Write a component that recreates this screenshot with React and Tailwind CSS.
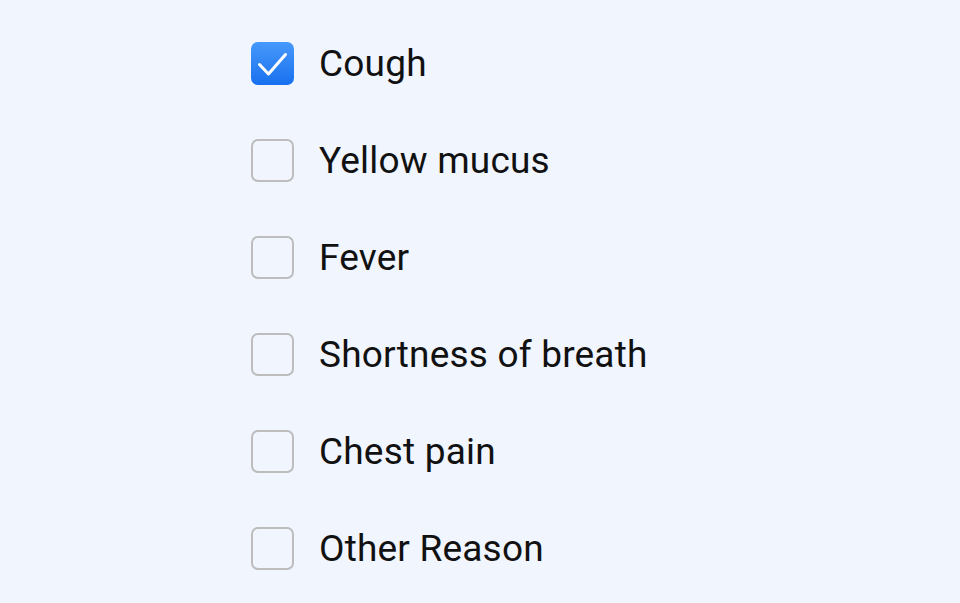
import React, { useState } from 'react';

const symptoms = ['Cough', 'Yellow mucus', 'Fever', 'Shortness of breath', 'Chest pain', 'Other Reason'];

const Check = ({ on }) =>
    on ? (
        <span className="flex h-[43px] w-[43px] shrink-0 rounded-[7px] bg-gradient-to-b from-[#4699fb] to-[#1670ee]">
            <svg width="43" height="43" viewBox="0 0 43 43" fill="none">
                <path d="M8.5 22.5 L17.5 32 L34.5 12.5" stroke="white" strokeWidth="3" strokeLinecap="round" strokeLinejoin="round" />
            </svg>
        </span>
    ) : (
        <span className="h-[43px] w-[43px] shrink-0 rounded-[7px] border-2 border-[#bdbdbd]" />
    );

export default function App() {
    const [checked, setChecked] = useState({ Cough: true });

    return (
        <div className="min-h-[603px] w-full bg-[#f0f5fe] pl-[251px] pt-[42px] font-['Roboto',sans-serif]">
            <ul className="flex flex-col gap-[54px]">
                {symptoms.map((s) => (
                    <li
                        key={s}
                        onClick={() => setChecked({ ...checked, [s]: !checked[s] })}
                        className="flex h-[43px] cursor-pointer items-center gap-[25px]"
                    >
                        <Check on={!!checked[s]} />
                        <span className="text-[37px] leading-none tracking-[0.2px] text-[#111111]">{s}</span>
                    </li>
                ))}
            </ul>
        </div>
    );
}
